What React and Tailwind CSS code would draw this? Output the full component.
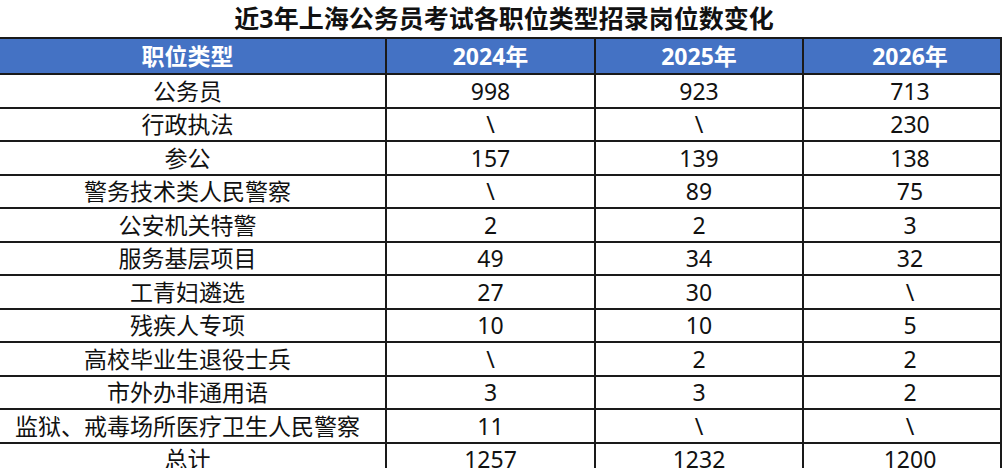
import React from "react";

const rows = [
  ["公务员", "998", "923", "713"],
  ["行政执法", "\\", "\\", "230"],
  ["参公", "157", "139", "138"],
  ["警务技术类人民警察", "\\", "89", "75"],
  ["公安机关特警", "2", "2", "3"],
  ["服务基层项目", "49", "34", "32"],
  ["工青妇遴选", "27", "30", "\\"],
  ["残疾人专项", "10", "10", "5"],
  ["高校毕业生退役士兵", "\\", "2", "2"],
  ["市外办非通用语", "3", "3", "2"],
  ["监狱、戒毒场所医疗卫生人民警察", "11", "\\", "\\"],
  ["总计", "1257", "1232", "1200"],
];

const font = { fontFamily: '"Noto Sans", "Noto Sans CJK SC", sans-serif' };

export default function App() {
  return (
    <div className="w-[1004px] h-[468px] overflow-hidden bg-white text-black" style={font}>
      <div className="h-[37px] flex items-center justify-center pl-[4px]">
        <span className="text-[25px] font-bold leading-none text-[#111]">近3年上海公务员考试各职位类型招录岗位数变化</span>
      </div>
      <div className="w-[1002px] border-t-2 border-r-2 border-[#1a1a1a]">
        <div className="flex h-[36px] bg-[#4472c4] text-white font-bold text-[23px] border-b-2 border-[#1a1a1a]">
          <div className="w-[387px] flex items-center justify-center pr-[10px] border-r-2 border-[#1a1a1a]">职位类型</div>
          <div className="w-[209px] flex items-center justify-center border-r-2 border-[#1a1a1a]">2024年</div>
          <div className="w-[208px] flex items-center justify-center border-r-2 border-[#1a1a1a]">2025年</div>
          <div className="flex-1 flex items-center justify-center pl-[16px]">2026年</div>
        </div>
        {rows.map((r, i) => (
          <div key={i} className="flex h-[33.5px] text-[23px] text-[#111] border-b-2 border-[#1a1a1a]">
            <div className="w-[387px] flex items-center justify-center pr-[10px] border-r-2 border-[#1a1a1a] whitespace-nowrap">{r[0]}</div>
            <div className="w-[209px] flex items-center justify-center border-r-2 border-[#1a1a1a]">{r[1]}</div>
            <div className="w-[208px] flex items-center justify-center border-r-2 border-[#1a1a1a]">{r[2]}</div>
            <div className="flex-1 flex items-center justify-center pl-[16px]">{r[3]}</div>
          </div>
        ))}
      </div>
    </div>
  );
}
